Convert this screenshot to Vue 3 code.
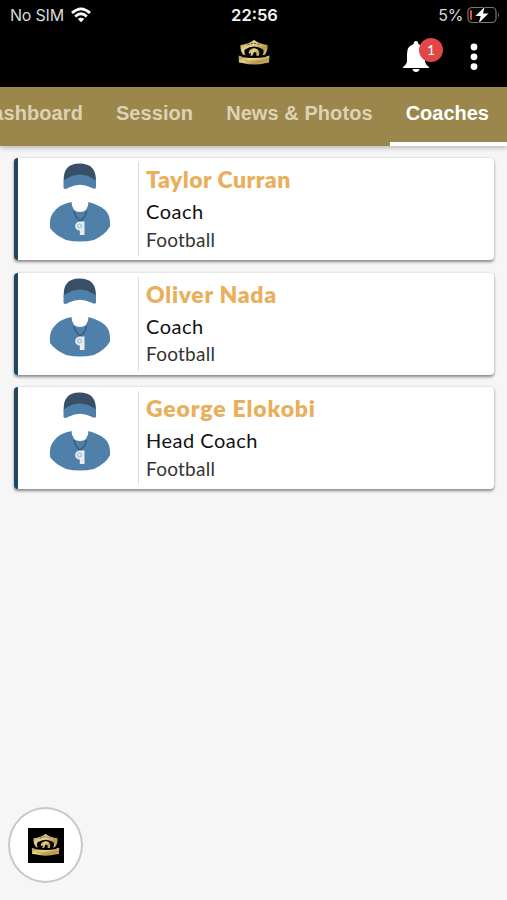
<script setup>
const tabs = ['Dashboard', 'Session', 'News & Photos', 'Coaches']
const active = 'Coaches'
const coaches = [
  { name: 'Taylor Curran', role: 'Coach', sport: 'Football', fit: 'taylor' },
  { name: 'Oliver Nada', role: 'Coach', sport: 'Football', fit: 'oliver' },
  { name: 'George Elokobi', role: 'Head Coach', sport: 'Football', fit: 'george' },
]
</script>

<template>
  <div class="screen">
    <svg class="defs" aria-hidden="true">
      <defs>
        <linearGradient id="gold" x1="0" y1="0" x2="1" y2="1">
          <stop offset="0" stop-color="#a8863e" />
          <stop offset=".4" stop-color="#e8d68f" />
          <stop offset=".7" stop-color="#b8964a" />
          <stop offset="1" stop-color="#dfc878" />
        </linearGradient>
        <symbol id="crest" viewBox="0 0 32 27">
          <path d="M2.500 6Q11 5 16 .8Q21 5 29.500 6Q30 12.500 26.500 16H24.500Q26.500 13 25 10.500Q16 4.500 7 10.500Q5.500 13 7.500 16H5.500Q2 12.500 2.500 6Z" fill="url(#gold)" />
          <path d="M9.500 6Q16 3 22.500 6" fill="none" stroke="#6f5a28" stroke-width="1.100" stroke-dasharray="2.200 1.200" />
          <path d="M11 15Q10 11.500 13 10L16 9L19.500 10.200L21.500 13L20.800 16.800H18.500L18 13.500L16 13L14.500 16.800H12.500L13 13.500Z" fill="url(#gold)" />
          <path d="M.5 16.500L4 17.500V18Q16 20 28 18V17.500L31.500 16.500L31 23.500L28 24Q16 27 4 24L1 23.500Z" fill="url(#gold)" />
          <path d="M6.500 21.500Q16 23.200 25.500 21.500" fill="none" stroke="#ad924c" stroke-width="1.200" stroke-dasharray="1.500 .8" />
        </symbol>
      </defs>
    </svg>

    <header class="top">
      <div class="status">
        <div class="carrier">
          <span>No SIM</span>
          <svg width="20" height="16" viewBox="0 0 20 16" fill="none" stroke="#fff" stroke-width="2.700">
            <path d="M1 6Q10-2.300 19 6" />
            <path d="M4.200 9.500Q10 4 15.800 9.500" />
            <path d="M6.800 12.100Q10 9.200 13.200 12.100L10 15.300Z" fill="#fff" stroke="none" />
          </svg>
        </div>
        <b class="clock">22:56</b>
        <div class="power">
          <span>5%</span>
          <svg width="33" height="18" viewBox="0 0 33 18">
            <rect x="1" y="1.500" width="28" height="15" rx="4" fill="none" stroke="#777" stroke-width="1.200" />
            <path d="M31 6.500Q33 9 31 11.500Z" fill="#777" />
            <rect x="3" y="4" width="2" height="10" rx="1" fill="#ed4b38" />
            <path d="M17.500 1L8.500 10H13.700L11.800 17L21.500 7.500H16Z" fill="#fff" stroke="#000" stroke-width="1" paint-order="stroke" />
          </svg>
        </div>
      </div>
      <div class="toolbar">
        <svg class="crest"><use href="#crest" /></svg>
        <div class="actions">
          <div class="bell">
            <svg width="28" height="32" viewBox="0 0 28 32" fill="#fff">
              <path d="M14 0Q16.300 0 16.300 3Q23 5 23 13V20Q23 23 27 26V27H1V26Q5 23 5 20V13Q5 5 11.700 3Q11.700 0 14 0Z" />
              <path d="M10.500 28H17.500Q17 31 14 31Q11 31 10.500 28Z" />
            </svg>
            <span class="badge">1</span>
          </div>
          <svg class="more" width="8" height="28" viewBox="0 0 8 28" fill="#fff">
            <circle cx="4" cy="4" r="3.400" /><circle cx="4" cy="13.800" r="3.400" /><circle cx="4" cy="23.600" r="3.400" />
          </svg>
        </div>
      </div>
    </header>

    <nav class="tabs">
      <div v-for="t in tabs" :key="t" class="tab" :class="{ active: t === active }">{{ t }}</div>
    </nav>

    <main class="list">
      <article v-for="c in coaches" :key="c.name" class="card">
        <div class="avatar">
          <svg width="62" height="80" viewBox="0 0 62 80">
            <path d="M14.800 19Q13.500 .5 30.500 .5Q48 .5 46.800 19Z" fill="#374f67" />
            <path d="M14.500 25V17.500Q31 5.500 47 17.500V25Q45 26.500 42 24.500Q31 19 20 24.500Q16.500 27 14.500 25Z" fill="#4f80a9" />
            <path d="M22.500 39Q23 49 31 49Q39 49 39.500 39Q54 43 58.500 50Q61.500 55 61 63.500Q56 72 45 77Q31 80 17 77Q6 72 1 65Q0 55 4 50Q10 41 22.500 39Z" fill="#4f80a9" />
            <path d="M25 48Q26 54 31 58Q37 54 37.500 48" fill="none" stroke="#375774" stroke-width="1.300" />
            <path d="M30.500 58.500H35.500V72H30.800V67.500A4.500 4.500 0 1 1 30.500 58.500Z" fill="#e5edf2" />
            <circle cx="30.500" cy="63" r="2" fill="#e5edf2" stroke="#8fadc4" stroke-width=".9" />
          </svg>
        </div>
        <div class="info">
          <h2 :class="c.fit">{{ c.name }}</h2>
          <p class="role">{{ c.role }}</p>
          <p class="sport">{{ c.sport }}</p>
        </div>
      </article>
    </main>

    <div class="fab"><div class="tile"><svg class="mini"><use href="#crest" /></svg></div></div>
  </div>
</template>

<style>
body { background: #f6f6f6; overflow: hidden; }
</style>

<style scoped>
.screen { position: relative; width: 507px; height: 900px; overflow: hidden; background: #f6f6f6; font-family: Lato, sans-serif; }
.defs { position: absolute; width: 0; height: 0; }
.top { height: 87px; background: #000; color: #fff; }
.status { height: 30px; display: grid; grid-template-columns: 1fr auto 1fr; align-items: center; padding: 0 8px 0 10px; font: 16px/30px Inter, sans-serif; color: #d8d8d8; }
.carrier, .power { display: flex; align-items: center; gap: 7px; }
.carrier span { letter-spacing: -.2px; }
.carrier svg { margin-top: -1px; }
.power { justify-content: flex-end; gap: 4px; }
.power span { letter-spacing: -.4px; }
.power svg { margin-right: -1px; }
.clock { font-weight: 600; font-size: 16.500px; color: #f3f3f3; }
.toolbar { height: 57px; display: grid; grid-template-columns: 1fr 32px 1fr; }
.crest { grid-column: 2; width: 32px; height: 27px; margin-top: 9px; }
.actions { display: flex; justify-content: flex-end; padding: 11px 29px 0 0; }
.bell { position: relative; width: 28px; height: 32px; margin-right: 40px; }
.badge { position: absolute; left: 17px; top: -3px; width: 24px; height: 24px; border-radius: 50%; background: #e04746; font: 14px/23px Lato, sans-serif; text-align: center; }
.more { margin-top: 2px; }
.tabs { position: relative; height: 59px; background: #9b864b; display: flex; justify-content: flex-end; box-shadow: 0 2px 5px rgba(0, 0, 0, .25); }
.tab { flex: none; box-sizing: border-box; height: 59px; padding: 0 17px 0 16px; font: bold 20px/52px "Liberation Sans", sans-serif; letter-spacing: .07px; color: #ddd2b6; white-space: nowrap; }
.tab.active { color: #fff; border-bottom: 4px solid #fff; padding: 0 18px 0 16px; letter-spacing: 0; }
.list { display: flex; flex-direction: column; gap: 12.500px; padding: 12px 13px 0 14px; }
.card { box-sizing: border-box; height: 102px; display: flex; align-items: center; background: #fff; border-left: 4px solid #1f4860; border-radius: 4px; box-shadow: 0 1.500px 3px rgba(0, 0, 0, .45); }
.avatar { width: 121px; height: 94px; box-sizing: border-box; padding: 1px 0 0 31px; border-right: 1px solid #ddd; }
.avatar svg { display: block; }
.info { padding-left: 7px; height: 102px; white-space: nowrap; }
.info h2, .info p { margin: 0; }
.info h2 { font-size: 23px; font-weight: 800; line-height: 30px; padding-top: 6px; color: #e9af5d; }
.info .taylor { letter-spacing: .45px; }
.info .oliver { letter-spacing: .67px; }
.info .george { letter-spacing: .82px; }
.role { font-size: 20px; line-height: 28px; padding-top: 3px; color: #111; letter-spacing: .5px; }
.sport { font-size: 19px; line-height: 26px; padding-top: 1.500px; color: #333; letter-spacing: .25px; }
.fab { position: absolute; left: 8px; top: 807px; width: 75px; height: 76px; box-sizing: border-box; border: 2px solid #c8c8c8; border-radius: 50%; background: #fff; display: grid; place-items: center; }
.tile { width: 36px; height: 35px; background: #000; display: grid; place-items: center; }
.mini { width: 29px; height: 24px; }
</style>
